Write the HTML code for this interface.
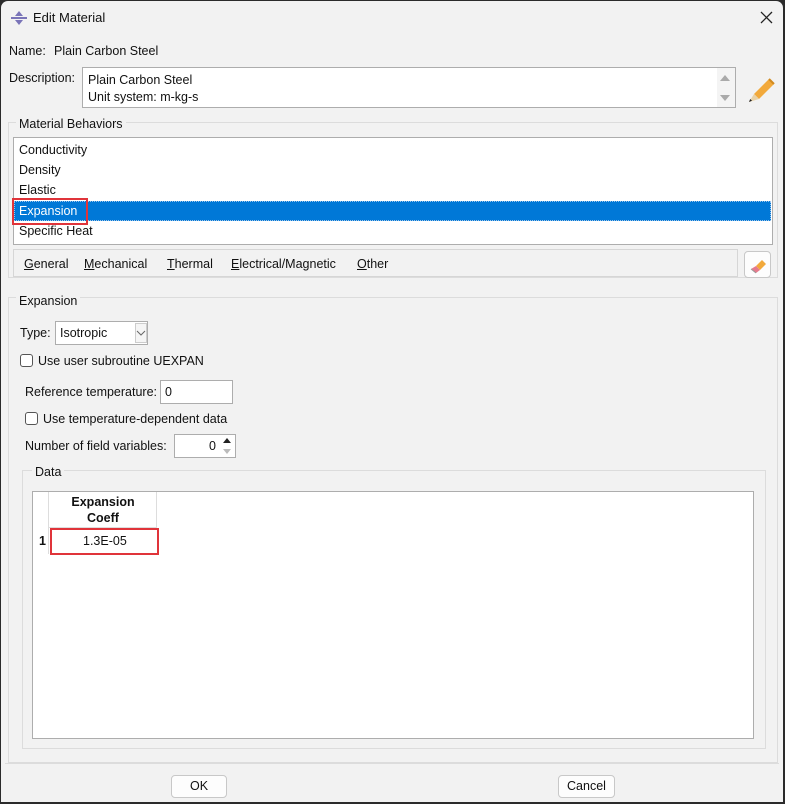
<!DOCTYPE html>
<html><head><meta charset="utf-8"><style>
*{margin:0;padding:0;box-sizing:border-box}
body{width:785px;height:804px;background:#2b2b2b;font-family:"Liberation Sans",sans-serif;font-size:12.5px;color:#111;position:relative;overflow:hidden}
.win{position:absolute;left:1px;top:1px;width:782px;height:801px;background:#f2f2f2;border-radius:7px 7px 0 0}
.a{position:absolute}
.t{position:absolute;white-space:nowrap;line-height:14px}
.box{position:absolute;background:#fff;border:1px solid #adadad}
.grp{position:absolute;border:1px solid #dcdcdc}
.lbl{position:absolute;background:#f2f2f2;padding:0 3px;line-height:14px}
.cb{position:absolute;width:13px;height:13px;border:1px solid #555;border-radius:3px;background:#fff}
.btn{position:absolute;background:#fdfdfd;border:1px solid #c8c8c8;border-radius:4px;text-align:center;line-height:20px}
u{text-decoration:underline}
</style></head><body>
<div class="win">
<svg class="a" style="left:9px;top:9px" width="18" height="16" viewBox="0 0 18 16"><path d="M9 1 L13 6 H5 Z M9 15 L13 10 H5 Z" fill="#7a74b8"/><rect x="1" y="7" width="16" height="2" fill="#7a74b8"/></svg>
<div class="t" style="left:32px;top:10px;font-size:13px">Edit Material</div>
<svg class="a" style="left:759px;top:10px" width="13" height="13"><path d="M1 1L12 12M12 1L1 12" stroke="#222" stroke-width="1.3"/></svg>
<div class="t" style="left:8px;top:43px">Name:</div>
<div class="t" style="left:53px;top:43px">Plain Carbon Steel</div>
<div class="t" style="left:8px;top:70px">Description:</div>
<div class="box" style="left:81px;top:66px;width:654px;height:41px"></div>
<div class="t" style="left:87px;top:72px">Plain Carbon Steel</div>
<div class="t" style="left:87px;top:89px">Unit system: m-kg-s</div>
<div class="a" style="left:716px;top:67px;width:18px;height:39px;background:#f4f4f4"></div>
<svg class="a" style="left:718px;top:72px" width="12" height="30"><path d="M1 8L6 2L11 8Z M1 22L6 28L11 22Z" fill="#aaa"/></svg>
<svg class="a" style="left:744px;top:72px" width="32" height="30" viewBox="0 0 32 30"><path d="M9 21 L24 6 L29 11 L14 26 Z" fill="#f2a93b"/><path d="M24 6 L29 11" stroke="#d08a20" stroke-width="2"/><path d="M9 21 L14 26 L4 29 Z" fill="#e8d2a8"/><path d="M4 29 L7 27.8 L5.2 26 Z" fill="#222"/></svg>
<div class="grp" style="left:7px;top:121px;width:770px;height:156px"></div>
<div class="lbl" style="left:15px;top:116px">Material Behaviors</div>
<div class="box" style="left:12px;top:136px;width:760px;height:108px"></div>
<div class="a" style="left:13px;top:200px;width:757px;height:20px;background:#0078d7;border:1px dotted #9cc4ea"></div>
<div class="t" style="left:18px;top:142px">Conductivity</div>
<div class="t" style="left:18px;top:162px">Density</div>
<div class="t" style="left:18px;top:182px">Elastic</div>
<div class="t" style="left:18px;top:203px;color:#fff">Expansion</div>
<div class="t" style="left:18px;top:223px">Specific Heat</div>
<div class="a" style="left:11px;top:197px;width:76px;height:27px;border:2px solid #e0343a"></div>
<div class="a" style="left:12px;top:248px;width:725px;height:28px;border:1px solid #d6d6d6"></div>
<div class="t" style="left:23px;top:256px"><u>G</u>eneral</div>
<div class="t" style="left:83px;top:256px"><u>M</u>echanical</div>
<div class="t" style="left:166px;top:256px"><u>T</u>hermal</div>
<div class="t" style="left:230px;top:256px"><u>E</u>lectrical/Magnetic</div>
<div class="t" style="left:356px;top:256px"><u>O</u>ther</div>
<div class="btn" style="left:743px;top:250px;width:27px;height:27px"></div>
<svg class="a" style="left:747px;top:254px" width="20" height="20" viewBox="0 0 20 20"><path d="M8 11 L14 5 L18 9 L12 15 Z" fill="#f2a93b"/><path d="M8 11 L12 15 L8 18 L3 14 Z" fill="#e57a8c"/><path d="M3 14 L8 18" stroke="#999" stroke-width="1"/></svg>
<div class="grp" style="left:7px;top:296px;width:770px;height:466px"></div>
<div class="lbl" style="left:15px;top:293px">Expansion</div>
<div class="t" style="left:19px;top:325px">Type:</div>
<div class="box" style="left:54px;top:320px;width:93px;height:24px"></div>
<div class="t" style="left:59px;top:325px">Isotropic</div>
<div class="a" style="left:134px;top:322px;width:12px;height:20px;border:1px solid #ccc;background:#f5f5f5"></div>
<svg class="a" style="left:135px;top:328px" width="10" height="8"><path d="M1 2L5 6L9 2" stroke="#666" fill="none"/></svg>
<div class="cb" style="left:19px;top:353px"></div>
<div class="t" style="left:37px;top:353px">Use user subroutine UEXPAN</div>
<div class="t" style="left:24px;top:384px">Reference temperature:</div>
<div class="box" style="left:159px;top:379px;width:73px;height:24px"></div>
<div class="t" style="left:164px;top:384px">0</div>
<div class="cb" style="left:24px;top:411px"></div>
<div class="t" style="left:42px;top:411px">Use temperature-dependent data</div>
<div class="t" style="left:24px;top:438px">Number of field variables:</div>
<div class="box" style="left:173px;top:433px;width:62px;height:24px"></div>
<div class="t" style="left:208px;top:438px">0</div>
<svg class="a" style="left:220px;top:435px" width="12" height="20"><path d="M2 7L6 2L10 7Z" fill="#222"/><path d="M2 13L6 18L10 13Z" fill="#bbb"/></svg>
<div class="grp" style="left:21px;top:469px;width:744px;height:279px"></div>
<div class="lbl" style="left:31px;top:464px">Data</div>
<div class="box" style="left:31px;top:490px;width:722px;height:248px"></div>
<div class="a" style="left:32px;top:491px;width:16px;height:62px;border-right:1px solid #ddd"></div>
<div class="a" style="left:48px;top:491px;width:108px;height:36px;border-right:1px solid #ddd;border-bottom:1px solid #ddd"></div>
<div class="a" style="left:48px;top:493px;width:108px;text-align:center;font-weight:bold;line-height:16px">Expansion<br>Coeff</div>
<div class="t" style="left:38px;top:533px;font-weight:bold">1</div>
<div class="t" style="left:82px;top:533px">1.3E-05</div>
<div class="a" style="left:49px;top:527px;width:109px;height:27px;border:2px solid #e0343a"></div>
<div class="a" style="left:4px;top:762px;width:774px;height:1px;background:#dcdcdc"></div>
<div class="btn" style="left:170px;top:774px;width:56px;height:23px">OK</div>
<div class="btn" style="left:557px;top:774px;width:57px;height:23px">Cancel</div>
</div>
</body></html>
